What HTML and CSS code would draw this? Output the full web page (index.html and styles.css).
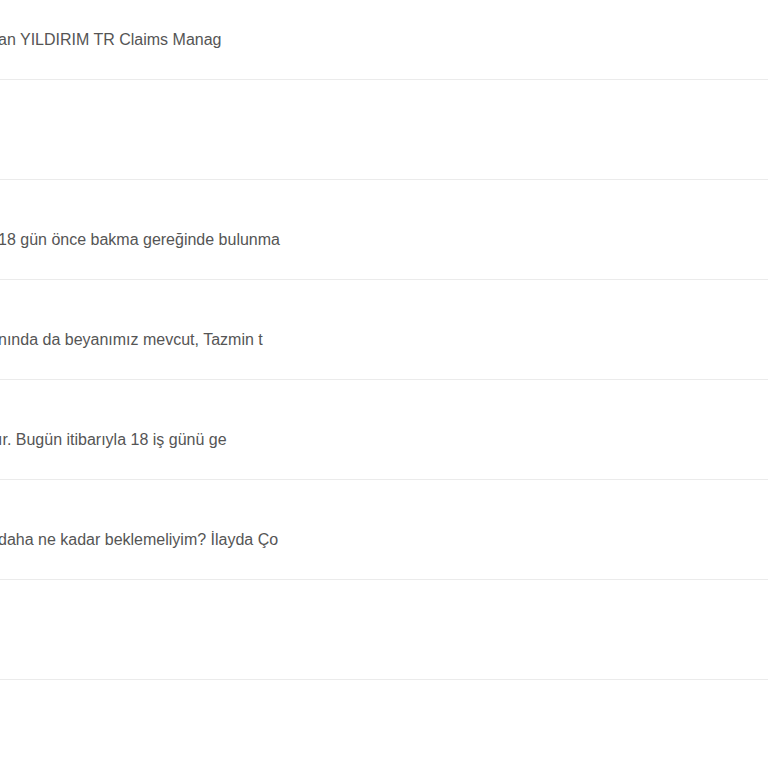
FILE: index.html
```html
<!DOCTYPE html>
<html lang="tr">
<head>
    <meta charset="UTF-8">
    <meta name="viewport" content="width=device-width, initial-scale=1.0">
    <title>Talepler</title>
    <link rel="stylesheet" href="styles.css">
</head>
<body>
    <div class="list">
        <div class="row first"><span class="cell">an YILDIRIM TR Claims Manag</span></div>
        <div class="row"><span class="cell"></span></div>
        <div class="row"><span class="cell">18 gün önce bakma gereğinde bulunma</span></div>
        <div class="row"><span class="cell">nında da beyanımız mevcut, Tazmin t</span></div>
        <div class="row"><span class="cell">ır. Bugün itibarıyla 18 iş günü ge</span></div>
        <div class="row"><span class="cell">daha ne kadar beklemeliyim? İlayda Ço</span></div>
        <div class="row"><span class="cell"></span></div>
    </div>
</body>
</html>
```

FILE: styles.css
```css
body {
    font-family: "Liberation Sans", Arial, sans-serif;
    background-color: #fff;
    color: #555;
    margin: 0;
    padding: 0;
}

.list {
    width: 100%;
    overflow: hidden;
}

.row {
    height: 99px;
    border-bottom: 1px solid #ebebeb;
    display: flex;
    align-items: flex-end;
}

.row.first {
    height: 79px;
}

.cell {
    display: block;
    font-size: 16px;
    line-height: 20px;
    height: 20px;
    margin-bottom: 29px; /* text sits ~40px above the line */
    white-space: nowrap;
    text-indent: -2px;
}
```
